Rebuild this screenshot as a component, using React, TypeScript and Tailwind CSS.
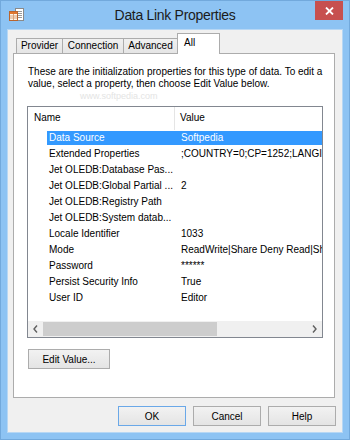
import React from "react";

const rows: [string, string][] = [
  ["Data Source", "Softpedia"],
  ["Extended Properties", ";COUNTRY=0;CP=1252;LANGID=0x0409"],
  ["Jet OLEDB:Database Pas...", ""],
  ["Jet OLEDB:Global Partial ...", "2"],
  ["Jet OLEDB:Registry Path", ""],
  ["Jet OLEDB:System datab...", ""],
  ["Locale Identifier", "1033"],
  ["Mode", "ReadWrite|Share Deny Read|Share Deny Write"],
  ["Password", "******"],
  ["Persist Security Info", "True"],
  ["User ID", "Editor"],
];

function TitleIcon() {
  return (
    <svg width="15" height="14" viewBox="0 0 15 14">
      <rect x="6.5" y="0.5" width="8" height="12" fill="#ffffff" stroke="#8a8a8a" />
      <line x1="8" y1="3.5" x2="13" y2="3.5" stroke="#9a9a9a" />
      <line x1="8" y1="5.5" x2="13" y2="5.5" stroke="#9a9a9a" />
      <line x1="8" y1="7.5" x2="13" y2="7.5" stroke="#9a9a9a" />
      <line x1="8" y1="9.5" x2="13" y2="9.5" stroke="#9a9a9a" />
      <rect x="0.5" y="3.5" width="8" height="9" fill="#fff6ea" stroke="#b9652f" />
      <rect x="1" y="4" width="7" height="2" fill="#e0762f" />
      <line x1="1" y1="8" x2="8" y2="8" stroke="#d9a27a" />
      <line x1="1" y1="10" x2="8" y2="10" stroke="#d9a27a" />
      <line x1="4.5" y1="6" x2="4.5" y2="12" stroke="#d9a27a" />
    </svg>
  );
}

function Chevron({ dir }: { dir: "left" | "right" }) {
  return (
    <svg width="5" height="8" viewBox="0 0 5 8">
      {dir === "left" ? (
        <path d="M4 0.5 L1 4 L4 7.5" fill="none" stroke="#606060" strokeWidth="1.4" />
      ) : (
        <path d="M1 0.5 L4 4 L1 7.5" fill="none" stroke="#606060" strokeWidth="1.4" />
      )}
    </svg>
  );
}

function Btn({ label, def }: { label: string; def?: boolean }) {
  return (
    <div
      className={
        "flex items-center justify-center w-[68px] h-[20px] border bg-gradient-to-b from-[#f2f2f2] to-[#e4e4e4] text-[10px] text-black " +
        (def ? "border-[#6aa8e8]" : "border-[#acacac]")
      }
    >
      {label}
    </div>
  );
}

export default function App() {
  return (
    <div className="w-[350px] h-[440px] bg-[#8dc3f3] border border-[#72a9dc] flex flex-col font-['Liberation_Sans',Arial,sans-serif] text-black select-none">
      {/* Title bar */}
      <div className="h-[28px] grid grid-cols-[1fr_auto_1fr] items-start">
        <div className="pl-[8px] pt-[7px]">
          <TitleIcon />
        </div>
        <div className="pt-[5px] text-[14px] leading-[18px] tracking-[-0.3px] text-[#1b1b1b]">
          Data Link Properties
        </div>
        <div className="flex justify-end pr-[6px]">
          <div className="w-[28px] h-[19px] bg-[#c7504f] flex items-center justify-center">
            <svg width="9" height="8" viewBox="0 0 9 8">
              <path d="M1 0.5 L8 7.5 M8 0.5 L1 7.5" stroke="#ffffff" strokeWidth="1.8" />
            </svg>
          </div>
        </div>
      </div>

      {/* Client area */}
      <div className="ml-[6px] w-[336px] h-[404px] border border-[#b7d7f4] bg-[#f0f0f0] flex flex-col">
        {/* Tabs */}
        <div className="mt-[3px] h-[20px] pl-[8px] flex items-end relative z-10">
          <div className="w-[47px] h-[15px] border-t border-l border-r border-[#acacac] bg-gradient-to-b from-[#f0f0f0] to-[#e5e5e5] text-[10px] leading-[14px] text-center">
            Provider
          </div>
          <div className="-ml-px w-[62px] h-[15px] border-t border-l border-r border-[#acacac] bg-gradient-to-b from-[#f0f0f0] to-[#e5e5e5] text-[10px] leading-[14px] text-center">
            Connection
          </div>
          <div className="-ml-px w-[55px] h-[15px] border-t border-l border-r border-[#acacac] bg-gradient-to-b from-[#f0f0f0] to-[#e5e5e5] text-[10px] leading-[14px] text-center">
            Advanced
          </div>
          <div className="-ml-px -mb-px w-[43px] h-[21px] border-t border-l border-r border-[#acacac] bg-white text-[10px] leading-[14px] pl-[6px] pt-[2px]">
            All
          </div>
        </div>

        {/* Panel */}
        <div className="ml-[5px] w-[322px] h-[345px] border border-[#acacac] bg-white flex flex-col relative">
          <div className="absolute left-[66px] top-[37px] text-[9px] leading-[10px] text-[#e4e4e4]">
            www.softpedia.com
          </div>
          <div className="pl-[14px] pt-[12px] text-[10px] leading-[12px] relative">
            <div className="whitespace-nowrap">
              These are the initialization properties for this type of data. To edit a
            </div>
            <div className="whitespace-nowrap">
              value, select a property, then choose Edit Value below.
            </div>
          </div>

          {/* List */}
          <div className="mt-[16px] ml-[13px] w-[296px] h-[232px] border border-[#828790] bg-white flex flex-col text-[10px]">
            <div className="h-[23px] flex">
              <div className="w-[147px] border-r border-[#e5e5e5] pl-[6px] leading-[22px]">Name</div>
              <div className="pl-[5px] leading-[22px]">Value</div>
            </div>
            <div className="flex flex-col">
              {rows.map(([n, v], i) => (
                <div key={n} className="h-[16px] pl-[19px] flex items-center">
                  <div
                    className={
                      "h-[14px] flex-1 flex items-center overflow-hidden whitespace-nowrap " +
                      (i === 0 ? "bg-[#3399ff] text-white" : "")
                    }
                  >
                    <div className="w-[128px] shrink-0 pl-[2px] leading-[14px]">{n}</div>
                    <div className="pl-[6px] leading-[14px]">{v}</div>
                  </div>
                </div>
              ))}
            </div>
            <div className="flex-1" />
            <div className="h-[16px] flex bg-[#f0f0f0] items-stretch">
              <div className="w-[15px] flex items-center justify-center">
                <Chevron dir="left" />
              </div>
              <div className="w-[174px] my-[1px] bg-[#cdcdcd]" />
              <div className="flex-1" />
              <div className="w-[15px] flex items-center justify-center">
                <Chevron dir="right" />
              </div>
            </div>
          </div>

          <div className="mt-[11px] ml-[14px] w-[82px] h-[20px] border border-[#acacac] bg-gradient-to-b from-[#f2f2f2] to-[#e4e4e4] text-[10px] flex items-center justify-center">
            Edit Value...
          </div>
        </div>

        {/* Footer */}
        <div className="mt-[8px] pr-[6px] flex justify-end gap-[7px]">
          <Btn label="OK" def />
          <Btn label="Cancel" />
          <Btn label="Help" />
        </div>
      </div>
    </div>
  );
}
